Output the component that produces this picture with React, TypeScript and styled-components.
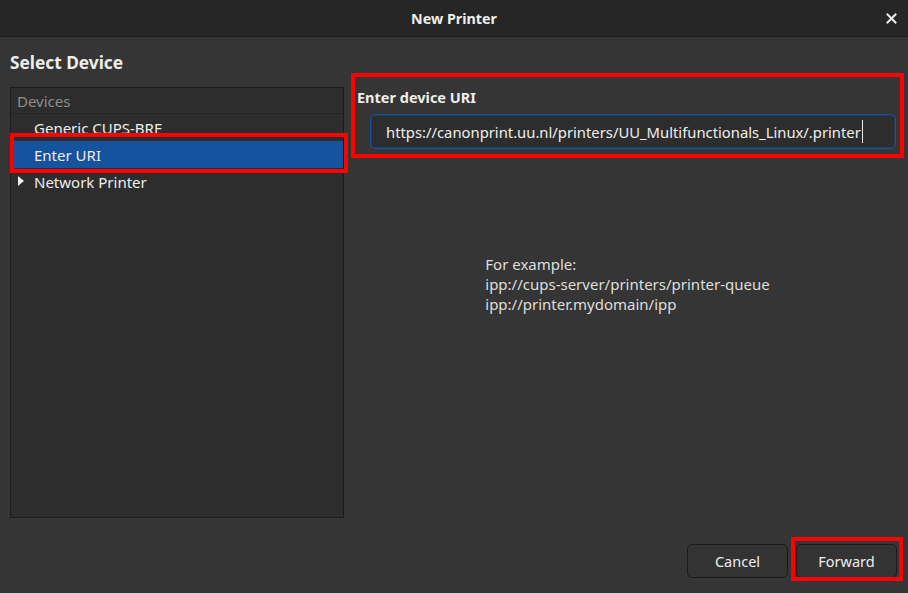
import styled, { createGlobalStyle } from "styled-components";

const GlobalStyle = createGlobalStyle`
    html, body {
        margin: 0;
        padding: 0;
        background: #353535;
    }
    * {
        box-sizing: border-box;
    }
`;

const Window = styled.div`
    width: 908px;
    height: 593px;
    display: flex;
    flex-direction: column;
    background: #353535;
    color: #eeeeec;
    font-family: "Noto Sans", "Open Sans", sans-serif;
    font-size: 14px;
    overflow: hidden;
`;

const TitleBar = styled.div`
    position: relative;
    height: 37px;
    flex-shrink: 0;
    display: flex;
    align-items: center;
    justify-content: center;
    background: #262626;
    border-bottom: 1px solid #1b1b1b;
    font-weight: 700;
    font-size: 14.3px;
`;

const CloseButton = styled.button`
    position: absolute;
    right: 8px;
    top: 9px;
    width: 18px;
    height: 18px;
    padding: 0;
    display: flex;
    align-items: center;
    justify-content: center;
    background: none;
    border: 0;
    color: #eeeeec;
`;

const Body = styled.div`
    flex: 1;
    display: flex;
    padding: 0 4px 0 10px;
    gap: 7px;
`;

const LeftColumn = styled.div`
    width: 334px;
    display: flex;
    flex-direction: column;
`;

const Heading = styled.div`
    height: 50px;
    display: flex;
    align-items: center;
    font-size: 17.3px;
    font-weight: 700;
    padding-top: 1px;
`;

const DeviceList = styled.div`
    height: 431px;
    background: #2d2d2d;
    border: 1px solid #1c1c1c;
    display: flex;
    flex-direction: column;
    font-size: 15px;
`;

const ListHeader = styled.div`
    height: 26px;
    display: flex;
    align-items: center;
    padding-left: 6px;
    color: #8e8e8d;
    border-bottom: 1px solid #252525;
`;

const Row = styled.div<{ $selected?: boolean }>`
    position: relative;
    height: 27px;
    display: flex;
    align-items: center;
    padding-left: 23px;
    background: ${(p) => (p.$selected ? "#15539e" : "transparent")};
    color: #eeeeec;
    ${(p) =>
        p.$selected &&
        `
        &::after {
            content: "";
            position: absolute;
            top: -8px;
            bottom: -5px;
            left: -1px;
            right: -5px;
            border: 4px solid #ff0000;
            pointer-events: none;
        }
    `}
`;

const Expander = styled.span`
    position: absolute;
    left: 7px;
    top: 8px;
    width: 0;
    height: 0;
    border-top: 5.5px solid transparent;
    border-bottom: 5.5px solid transparent;
    border-left: 6px solid #eeeeec;
`;

const RightColumn = styled.div`
    flex: 1;
    display: flex;
    flex-direction: column;
    padding-top: 36px;
`;

const UriSection = styled.div`
    border: 4px solid #ff0000;
    padding: 10px 4px 5px 2px;
    display: flex;
    flex-direction: column;
    gap: 7px;
`;

const FieldLabel = styled.div`
    font-weight: 700;
    font-size: 14.5px;
    line-height: 20px;
`;

const Entry = styled.div`
    margin-left: 13px;
    height: 35px;
    display: flex;
    align-items: center;
    padding-left: 15px;
    background: #2d2d2d;
    border: 1px solid #15539e;
    border-radius: 5px;
    box-shadow: inset 0 0 0 1px rgba(21, 83, 158, 0.4);
    font-size: 14.8px;
`;

const Caret = styled.span`
    display: inline-block;
    width: 1px;
    height: 23px;
    margin-left: 1px;
    background: #eeeeec;
`;

const ExampleArea = styled.div`
    display: flex;
    justify-content: center;
    padding-top: 96px;
`;

const ExampleText = styled.div`
    line-height: 20px;
    color: #dededd;
    font-size: 15px;
`;

const Footer = styled.div`
    height: 75px;
    flex-shrink: 0;
    display: flex;
    justify-content: flex-end;
    align-items: flex-start;
    gap: 8px;
    padding: 26px 11px 0 0;
`;

const Button = styled.button<{ $marked?: boolean }>`
    position: relative;
    width: 101px;
    height: 34px;
    background: #333333;
    border: 1px solid #1b1b1b;
    border-radius: 5px;
    color: #eeeeec;
    font-family: "Noto Sans", "Open Sans", sans-serif;
    font-size: 14.5px;
    ${(p) =>
        p.$marked &&
        `
        &::after {
            content: "";
            position: absolute;
            top: -8px;
            bottom: -4px;
            left: -6px;
            right: -7px;
            border: 4px solid #ff0000;
            pointer-events: none;
        }
    `}
`;

export default function App() {
    return (
        <>
            <GlobalStyle />
            <Window>
                <TitleBar>
                    New Printer
                    <CloseButton type="button">
                        <svg width="11" height="11" viewBox="0 0 11 11">
                            <path d="M1.5 1.5 L9.5 9.5 M9.5 1.5 L1.5 9.5" stroke="#eeeeec" strokeWidth="2" strokeLinecap="square" />
                        </svg>
                    </CloseButton>
                </TitleBar>
                <Body>
                    <LeftColumn>
                        <Heading>Select Device</Heading>
                        <DeviceList>
                            <ListHeader>Devices</ListHeader>
                            <Row>Generic CUPS-BRF</Row>
                            <Row $selected>Enter URI</Row>
                            <Row>
                                <Expander />
                                Network Printer
                            </Row>
                        </DeviceList>
                    </LeftColumn>
                    <RightColumn>
                        <UriSection>
                            <FieldLabel>Enter device URI</FieldLabel>
                            <Entry>
                                https://canonprint.uu.nl/printers/UU_Multifunctionals_Linux/.printer
                                <Caret />
                            </Entry>
                        </UriSection>
                        <ExampleArea>
                            <ExampleText>
                                For example:
                                <br />
                                ipp://cups-server/printers/printer-queue
                                <br />
                                ipp://printer.mydomain/ipp
                            </ExampleText>
                        </ExampleArea>
                    </RightColumn>
                </Body>
                <Footer>
                    <Button type="button">Cancel</Button>
                    <Button type="button" $marked>
                        Forward
                    </Button>
                </Footer>
            </Window>
        </>
    );
}
